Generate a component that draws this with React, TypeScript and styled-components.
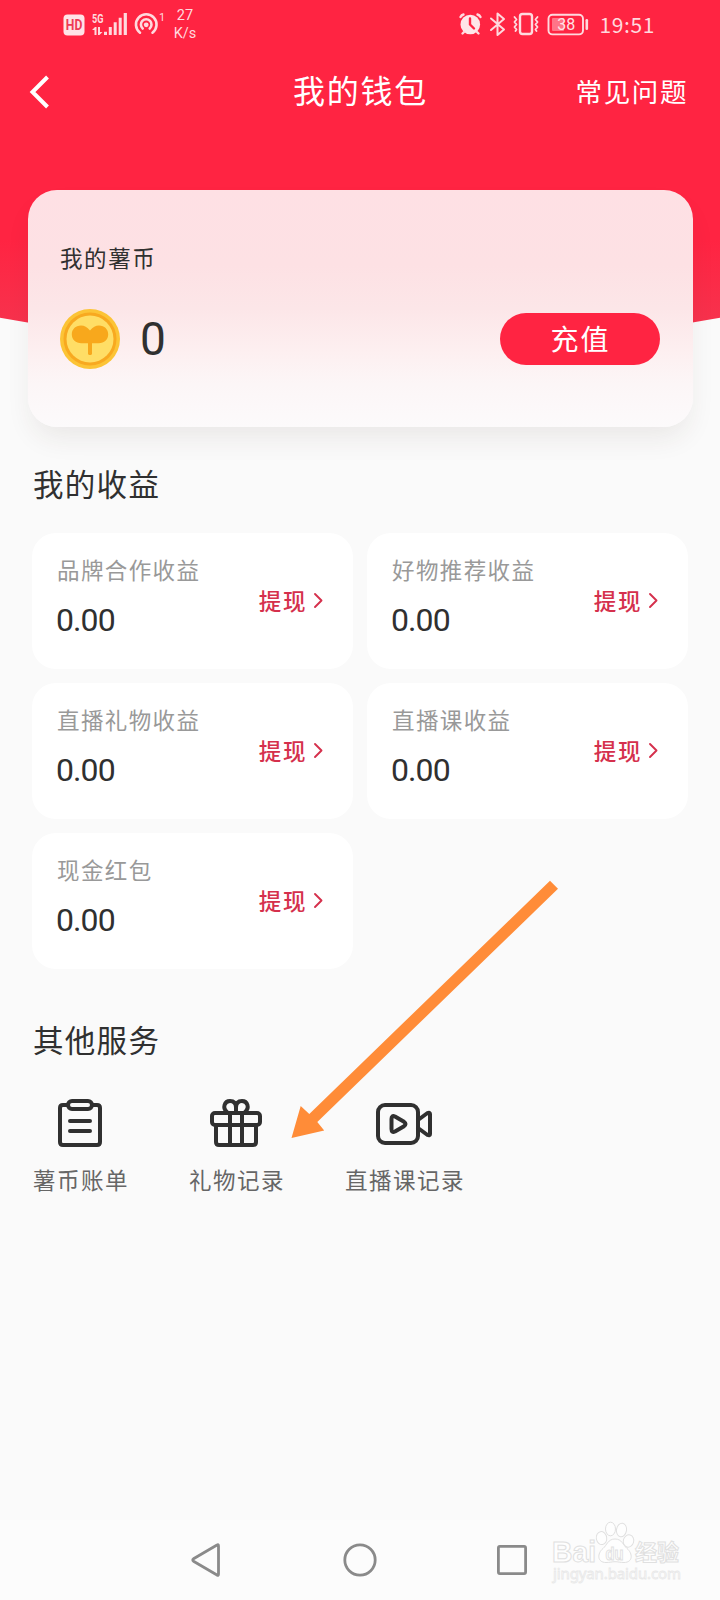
import React from 'react';
import styled, { createGlobalStyle } from 'styled-components';

const GlobalStyle = createGlobalStyle`
  * { box-sizing: border-box; }
  body {
    margin: 0;
    background: #fafafa;
    font-family: "Noto Sans CJK SC", "Noto Sans", sans-serif;
    color: #303030;
  }
`;

const Page = styled.div`
  position: relative;
  display: flex;
  flex-direction: column;
  width: 720px;
  height: 1600px;
  overflow: hidden;
  background: #fafafa;
`;

const Hero = styled.header`
  flex: none;
  height: 351px;
  background: linear-gradient(#ff2442 0, #ff2442 240px, #f7324d 322px);
  clip-path: circle(2022px at 50% -1672px);
`;

const StatusBar = styled.div`
  display: flex;
  justify-content: space-between;
  height: 48px;
  padding: 0 65px 0 63px;
  color: #ffd9de;
`;

const StatusGroup = styled.div`
  display: flex;
  align-items: center;
  height: 48px;
`;

const NetSpeed = styled.div`
  width: 34px;
  margin-left: 1px;
  padding-top: 1px;
  font-family: Roboto, sans-serif;
  font-size: 14.5px;
  line-height: 18px;
  text-align: center;
`;

const Clock = styled.span`
  margin-left: 10px;
  font-size: 21px;
  line-height: 46px;
  letter-spacing: 0.6px;
`;

const NavBar = styled.nav`
  display: grid;
  grid-template-columns: 200px 1fr 200px;
  align-items: center;
  height: 88px;
  padding: 0 32px 0 28px;
  color: #fff;
`;

const BackButton = styled.button`
  display: flex;
  width: 24px;
  height: 36px;
  padding: 0;
  border: 0;
  background: none;
  color: inherit;
`;

const Title = styled.h1`
  margin: -6px -5px 0 0;
  font-size: 32px;
  font-weight: 400;
  line-height: 40px;
  letter-spacing: 1.8px;
  text-align: center;
`;

const FaqLink = styled.a`
  margin-top: -3px;
  font-size: 26.5px;
  line-height: 36px;
  letter-spacing: 1.6px;
  text-align: right;
  white-space: nowrap;
`;

const BalanceCard = styled.section`
  position: relative;
  flex: none;
  display: flex;
  flex-direction: column;
  height: 237px;
  margin: -161px 27px 0 28px;
  padding: 50px 33px 0 32px;
  border-radius: 29px;
  background: linear-gradient(#fee0e4 0%, #fde1e4 32%, #fce6e8 50%, #fdeff0 68%, #fcf6f7 82%, #fcfafb 100%);
  box-shadow: 0 15px 28px -5px rgba(70, 45, 30, 0.09);
`;

const BalanceLabel = styled.div`
  height: 34px;
  font-size: 22.5px;
  line-height: 34px;
  letter-spacing: 1.6px;
`;

const BalanceRow = styled.div`
  display: flex;
  align-items: center;
  height: 60px;
  margin-top: 35px;
`;

const Amount = styled.span`
  flex: 1;
  margin-left: 20px;
  font-family: Roboto, sans-serif;
  font-size: 46px;
  line-height: 58px;
`;

const RechargeButton = styled.button`
  width: 160px;
  height: 52px;
  padding: 0 0 2px 1px;
  border: 0;
  border-radius: 26px;
  background: #ff2442;
  color: #fff;
  font: 400 28px/48px "Noto Sans CJK SC", sans-serif;
  letter-spacing: 2px;
`;

const SectionTitle = styled.h2<{ $top: number }>`
  flex: none;
  height: 44px;
  margin: ${(p) => p.$top}px 0 0 33px;
  font-size: 30.5px;
  font-weight: 400;
  line-height: 44px;
  letter-spacing: 1.3px;
`;

const EarningsGrid = styled.div`
  display: grid;
  flex: none;
  grid-template-columns: 321px 321px;
  grid-auto-rows: 136px;
  gap: 14px;
  margin: 28px 32px 0;
`;

const EarningCard = styled.article`
  display: flex;
  align-items: center;
  justify-content: space-between;
  padding: 0 30px 0 25px;
  border-radius: 24px;
  background: #fff;
`;

const EarningInfo = styled.div`
  padding-bottom: 12px;
  white-space: nowrap;
`;

const EarningLabel = styled.div`
  font-size: 22.5px;
  line-height: 34px;
  letter-spacing: 1.4px;
  color: #999;
`;

const EarningValue = styled.div`
  margin: 15px 0 0 -1px;
  font-family: Roboto, sans-serif;
  font-size: 32px;
  line-height: 38px;
  letter-spacing: -0.9px;
`;

const Withdraw = styled.a`
  display: flex;
  align-items: center;
  gap: 6px;
  padding-bottom: 2px;
  font-size: 22.5px;
  font-weight: 500;
  line-height: 32px;
  letter-spacing: 1.6px;
  color: #d5304c;
`;

const Services = styled.div`
  display: flex;
  flex: none;
  gap: 60px;
  margin: 37px 0 0 33px;
`;

const Service = styled.div`
  display: flex;
  flex-direction: column;
  align-items: center;

  svg {
    margin-right: 2px;
  }
`;

const ServiceLabel = styled.span`
  margin-top: 14px;
  font-size: 22.5px;
  line-height: 34px;
  letter-spacing: 1.5px;
  color: #666;
`;

const SystemNav = styled.footer`
  display: flex;
  flex: none;
  align-items: center;
  justify-content: center;
  gap: 118px;
  height: 80px;
  margin-top: auto;
  background: #fcfcfc;
`;

const Pointer = styled.svg`
  position: absolute;
  left: 280px;
  top: 870px;
`;

const Watermark = styled.svg`
  position: absolute;
  left: 545px;
  top: 1515px;
`;

const stroke = { fill: 'none', stroke: 'currentColor', strokeLinecap: 'round', strokeLinejoin: 'round' } as const;

const HdSignal = () => (
  <svg width="104" height="30" viewBox="63 9 104 30" fill="currentColor">
    <rect x="63.500" y="14.500" width="21" height="21" rx="4" fill="#ffe3e7" />
    <text x="65.800" y="30.200" fontFamily="Roboto" fontWeight="700" fontSize="14" fill="#ee3a55" textLength="16.500" lengthAdjust="spacingAndGlyphs">HD</text>
    <text x="92" y="22.500" fontFamily="Roboto" fontWeight="700" fontSize="12.500" textLength="11.500" lengthAdjust="spacingAndGlyphs">5G</text>
    <path d="M92 30l3-3h1.500v8h-2v-5z M98 27h2v5h2.500l-3 3H98z" />
    <path d="M104 31.800h3V35h-3zM108.800 27h3v8h-3zM113.700 22.300h3V35h-3zM118.700 17.800h3V35h-3zM123.700 13h3.200v22h-3.200z" />
    <g {...stroke} strokeWidth="2.600">
      <path d="M140 32.700a10.300 10.300 0 1 1 12.500 0" />
      <path d="M142.700 28.500a5.300 5.300 0 1 1 7 0" />
    </g>
    <circle cx="146.200" cy="24.800" r="2.400" />
    <text x="159" y="20.500" fontFamily="Roboto" fontSize="11">1</text>
  </svg>
);

const StatusIcons = () => (
  <svg width="132" height="30" viewBox="459 9 132 30" fill="currentColor">
    <circle cx="471.300" cy="24.500" r="9.800" fill="#ffe6e9" />
    <g {...stroke} strokeWidth="2.400">
      <path d="M461.500 17q1-2 3-2.500M481.500 17q-1-2-3-2.500M465 32l-1.500 1.500M478 32l1.500 1.500" />
      <path d="M471 18.500v6l4 4" stroke="#ff2442" />
      <path d="M492 18.500l13 11-6.500 5.500V13.500l6.500 5.500-13 11" strokeWidth="2" />
      <rect x="521" y="14" width="12" height="20" rx="2.500" />
      <path d="M515.500 17l2 2.500-2 2.500 2 2.500-2 2.500 2 2.500-1 1.500M538.500 17l-2 2.500 2 2.500-2 2.500 2 2.500-2 2.500 1 1.500" strokeWidth="1.900" />
      <rect x="549.500" y="14.800" width="34.500" height="19.600" rx="4" strokeWidth="1.900" />
    </g>
    <rect x="553" y="18" width="12" height="13" rx="1" opacity="0.450" />
    <rect x="586.500" y="19" width="2.600" height="11" rx="1.300" />
    <text x="567.300" y="30.200" textAnchor="middle" fontFamily="Roboto" fontSize="16" fill="#ffe3e7">38</text>
  </svg>
);

const Coin = () => (
  <svg width="60" height="60" viewBox="0 0 60 60">
    <circle cx="30" cy="30" r="30" fill="#fcc436" />
    <circle cx="30" cy="30" r="26.500" fill="#f8a920" />
    <circle cx="30" cy="30" r="23.500" fill="#ffde66" />
    <path d="M30 21.500C27 18 24.500 16.600 21 16.600c-5.500 0-9.200 4-9.200 8.700 0 5.300 4 8.900 9.500 8.900H28v10.500c0 1.800 4 1.800 4 0V34.200h6.700c5.500 0 9.500-3.600 9.500-8.900 0-4.700-3.700-8.700-9.200-8.700-3.500 0-6 1.400-9 4.900z" fill="#f8a81c" />
  </svg>
);

const BillIcon = () => (
  <svg width="56" height="50" viewBox="52 1098 56 50" {...stroke} stroke="#303030" strokeWidth="4">
    <path d="M67.500 1105H63q-3 0-3 3v34q0 3 3 3h34q3 0 3-3v-34q0-3-3-3h-4.500" />
    <rect x="68" y="1101" width="24" height="8" rx="4" />
    <path d="M70 1121h20M70 1131h20" />
  </svg>
);

const GiftIcon = () => (
  <svg width="56" height="50" viewBox="208 1098 56 50" {...stroke} stroke="#303030" strokeWidth="4">
    <rect x="212" y="1113" width="48" height="12" rx="3" />
    <path d="M216 1125v17q0 3 3 3h34q3 0 3-3v-17M230 1113v32M242 1113v32" />
    <path d="M227 1112c-5-4-2.500-11 3-11 4 0 6 2.500 6 6.500v4M245 1112c5-4 2.500-11-3-11-4 0-6 2.500-6 6.500" />
  </svg>
);

const VideoIcon = () => (
  <svg width="58" height="50" viewBox="375 1098 58 50" {...stroke} stroke="#303030" strokeWidth="4">
    <rect x="378" y="1105" width="40" height="38" rx="7" />
    <path d="M418 1120l9.500-7q2.500-1 2.500 1v20q0 2-2.500 1l-9.500-7" />
    <path d="M391.500 1119v10q0 4 3.500 2.500l9-5.300q3-2.200 0-4.400l-9-5.300q-3.500-1.500-3.500 2.500z" />
  </svg>
);

const earnings = ['品牌合作收益', '好物推荐收益', '直播礼物收益', '直播课收益', '现金红包'];

const services = [
  { label: '薯币账单', Icon: BillIcon },
  { label: '礼物记录', Icon: GiftIcon },
  { label: '直播课记录', Icon: VideoIcon },
];

export default function App() {
  return (
    <Page>
      <GlobalStyle />
      <Hero>
        <StatusBar>
          <StatusGroup>
            <HdSignal />
            <NetSpeed>27<br />K/s</NetSpeed>
          </StatusGroup>
          <StatusGroup>
            <StatusIcons />
            <Clock>19:51</Clock>
          </StatusGroup>
        </StatusBar>
        <NavBar>
          <BackButton aria-label="返回">
            <svg width="24" height="36" viewBox="0 0 24 36" fill="none" stroke="currentColor" strokeWidth="4">
              <path d="M19.500 3L4.500 18l15 15" />
            </svg>
          </BackButton>
          <Title>我的钱包</Title>
          <FaqLink>常见问题</FaqLink>
        </NavBar>
      </Hero>

      <BalanceCard>
        <BalanceLabel>我的薯币</BalanceLabel>
        <BalanceRow>
          <Coin />
          <Amount>0</Amount>
          <RechargeButton>充值</RechargeButton>
        </BalanceRow>
      </BalanceCard>

      <SectionTitle $top={34}>我的收益</SectionTitle>
      <EarningsGrid>
        {earnings.map((name) => (
          <EarningCard key={name}>
            <EarningInfo>
              <EarningLabel>{name}</EarningLabel>
              <EarningValue>0.00</EarningValue>
            </EarningInfo>
            <Withdraw>
              提现
              <svg width="10" height="17" viewBox="0 0 10 17" {...stroke} strokeWidth="1.900">
                <path d="M2 2l6.500 6.500L2 15" />
              </svg>
            </Withdraw>
          </EarningCard>
        ))}
      </EarningsGrid>

      <SectionTitle $top={48}>其他服务</SectionTitle>
      <Services>
        {services.map(({ label, Icon }) => (
          <Service key={label}>
            <Icon />
            <ServiceLabel>{label}</ServiceLabel>
          </Service>
        ))}
      </Services>

      <SystemNav>
        <svg width="34" height="40" viewBox="3 0 34 40" {...stroke} stroke="#8a8a8a" strokeWidth="2.800">
          <path d="M30.500 6v28q0 2-1.500 1L5.500 21.200q-1.500-1.200 0-2.400L29 5q1.500-1 1.500 1z" />
        </svg>
        <svg width="34" height="34" viewBox="0 0 34 34" {...stroke} stroke="#8a8a8a" strokeWidth="2.800">
          <circle cx="17" cy="17" r="15.200" />
        </svg>
        <svg width="34" height="34" viewBox="0 0 34 34" {...stroke} stroke="#8a8a8a" strokeWidth="2.800">
          <rect x="3.400" y="3.400" width="27.200" height="27.200" rx="1.500" />
        </svg>
      </SystemNav>

      <Pointer width="290" height="280" viewBox="280 870 290 280">
        <path d="M291.500 1138L300.700 1106L309.300 1114L550 880.700L558 888.700L317.300 1122L324.200 1130.500Z" fill="#ff8c38" />
      </Pointer>

      <Watermark width="150" height="75" viewBox="545 1515 150 75" fill="#fefefe" stroke="#e0e0e0" strokeWidth="1">
        <text x="552" y="1562" fontFamily="Liberation Sans" fontWeight="700" fontSize="29" textLength="44" lengthAdjust="spacingAndGlyphs">Bai</text>
        <ellipse cx="601.500" cy="1538" rx="5.200" ry="6.500" transform="rotate(-10 602 1538)" />
        <ellipse cx="610.500" cy="1529" rx="5" ry="6.800" />
        <ellipse cx="621.500" cy="1530" rx="5" ry="6.800" transform="rotate(10 621.500 1530)" />
        <ellipse cx="628.500" cy="1541" rx="5.200" ry="6.200" transform="rotate(15 628.500 1541)" />
        <path d="M615 1539c-7 0-8 6-12 9.500-6 5-6 14 3 14 4 0 6-.8 9-.8s5 .8 9 .8c9 0 9-9 3-14-4-3.500-5-9.500-12-9.500z" />
        <text x="605.500" y="1559.500" fontFamily="Liberation Sans" fontWeight="700" fontSize="18" textLength="18" lengthAdjust="spacingAndGlyphs">du</text>
        <text x="635" y="1560" fontFamily="Noto Sans CJK SC" fontWeight="700" fontSize="22" textLength="44">经验</text>
        <text x="553" y="1579" fontFamily="Noto Sans" fontSize="15" stroke="#e8e8e8" strokeWidth="0.800" textLength="128">jingyan.baidu.com</text>
      </Watermark>
    </Page>
  );
}
